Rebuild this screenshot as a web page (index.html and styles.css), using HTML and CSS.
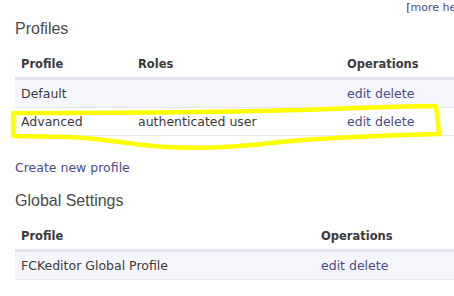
FILE: index.html
```html
<!DOCTYPE html>
<html lang="en">
<head>
    <meta charset="UTF-8">
    <title>FCKeditor profiles</title>
    <link rel="stylesheet" href="styles.css">
</head>
<body>
    <div class="page">
        <div class="help">[<a href="#">more help...</a>]</div>

        <h2>Profiles</h2>
        <table class="list profiles">
            <thead>
                <tr>
                    <th class="col-name">Profile</th>
                    <th class="col-roles">Roles</th>
                    <th>Operations</th>
                </tr>
            </thead>
            <tbody>
                <tr class="odd">
                    <td>Default</td>
                    <td></td>
                    <td><a href="#">edit</a> <a href="#">delete</a></td>
                </tr>
                <tr class="even">
                    <td>Advanced</td>
                    <td>authenticated user</td>
                    <td><a href="#">edit</a> <a href="#">delete</a></td>
                </tr>
            </tbody>
        </table>

        <p class="create"><a href="#">Create new profile</a></p>

        <h2>Global Settings</h2>
        <table class="list global">
            <thead>
                <tr>
                    <th class="col-global">Profile</th>
                    <th>Operations</th>
                </tr>
            </thead>
            <tbody>
                <tr class="odd">
                    <td>FCKeditor Global Profile</td>
                    <td><a href="#">edit</a> <a href="#">delete</a></td>
                </tr>
            </tbody>
        </table>

        <!-- hand-drawn marker around the Advanced row -->
        <svg class="marker" width="454" height="296" viewBox="0 0 454 296">
            <path d="M13,113 C100,113 250,112 330,109 C380,107 415,106 436,106 L439,134 C400,135 330,137 280,142 C240,147 200,149 165,147 C130,145 110,139 70,137 L13,136 Z" />
        </svg>
    </div>
</body>
</html>
```

FILE: styles.css
```css
html, body {
    overflow: hidden;
}

body {
    margin: 0;
    background: #fff;
    color: #3b3b3b;
    font-family: 'DejaVu Sans', Verdana, sans-serif;
    font-size: 12.5px;
    line-height: 16px;
}

a {
    color: #4b4c8a;
    text-decoration: none;
}

.page {
    position: relative;
    width: 470px;
    padding-left: 15px;
}

.help {
    height: 16px;
    padding-right: 4px;
    font-size: 11px;
    line-height: 16px;
    text-align: right;
    color: #333;
}

h2 {
    margin: 3px 0 13px;
    font-family: 'Liberation Sans', Arial, sans-serif;
    font-size: 16px;
    font-weight: normal;
    line-height: 20px;
    color: #4a4a4a;
}

.list {
    width: 470px;
    border-collapse: collapse;
    table-layout: fixed;
}

.list th {
    padding: 4px 6px 5px;
    text-align: left;
    font-size: 11.5px;
    font-weight: bold;
    color: #3a3a3a;
    border-bottom: 3px solid #e3e4f0;
}

.list td {
    padding: 6px 6px 5px;
    border-bottom: 1px solid #e6e7ee;
    white-space: nowrap;
}

.list tr.odd {
    background: #f5f6fb;
}

.list tr.even {
    background: #fff;
}

.col-name {
    width: 105px;
}

.col-roles {
    width: 197px;
}

.col-global {
    width: 288px;
}

.create {
    margin: 24px 0 15px;
}

.marker {
    position: absolute;
    top: 0;
    left: 0;
    pointer-events: none;
}

.marker path {
    fill: none;
    stroke: #ffff00;
    stroke-width: 4.5;
    stroke-linejoin: round;
    stroke-linecap: round;
}
```
